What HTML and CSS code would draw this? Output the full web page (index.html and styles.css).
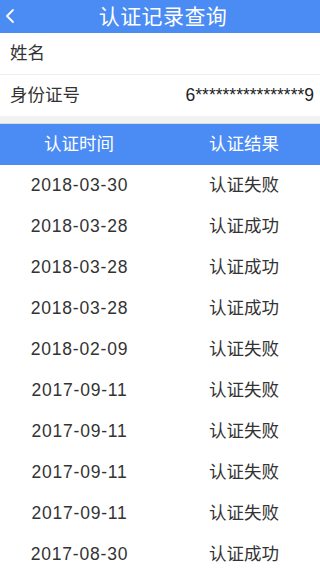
FILE: index.html
```html
<!DOCTYPE html>
<html lang="zh-CN">
<head>
<meta charset="utf-8">
<meta name="viewport" content="width=device-width, initial-scale=1">
<title>认证记录查询</title>
<link rel="stylesheet" href="styles.css">
</head>
<body>
<div class="page">
  <header class="topbar">
    <svg class="back" width="12" height="16" viewBox="0 0 12 16"><path d="M9 2 L3 8 L9 14" fill="none" stroke="#fff" stroke-width="1.8" stroke-linecap="round" stroke-linejoin="round"/></svg>
    <h1 class="title">认证记录查询</h1>
  </header>
  <section class="info">
    <div class="info-row bordered"><span class="label">姓名</span><span class="value"></span></div>
    <div class="info-row"><span class="label">身份证号</span><span class="value">6****************9</span></div>
  </section>
  <div class="gap"></div>
  <div class="table">
    <div class="thead">
      <div class="cell">认证时间</div>
      <div class="cell right">认证结果</div>
    </div>
    <div class="trow"><div class="cell date">2018-03-30</div><div class="cell right">认证失败</div></div>
    <div class="trow"><div class="cell date">2018-03-28</div><div class="cell right">认证成功</div></div>
    <div class="trow"><div class="cell date">2018-03-28</div><div class="cell right">认证成功</div></div>
    <div class="trow"><div class="cell date">2018-03-28</div><div class="cell right">认证成功</div></div>
    <div class="trow"><div class="cell date">2018-02-09</div><div class="cell right">认证失败</div></div>
    <div class="trow"><div class="cell date">2017-09-11</div><div class="cell right">认证失败</div></div>
    <div class="trow"><div class="cell date">2017-09-11</div><div class="cell right">认证失败</div></div>
    <div class="trow"><div class="cell date">2017-09-11</div><div class="cell right">认证失败</div></div>
    <div class="trow"><div class="cell date">2017-09-11</div><div class="cell right">认证失败</div></div>
    <div class="trow"><div class="cell date">2017-08-30</div><div class="cell right">认证成功</div></div>
  </div>
</div>
</body>
</html>
```
FILE: styles.css
```css
* { box-sizing: border-box; }
html, body {
  margin: 0;
  padding: 0;
  background: #fff;
  font-family: "Liberation Sans", "Noto Sans CJK SC", sans-serif;
  color: #333;
}
.page {
  width: 320px;
  height: 568px;
  overflow: hidden;
}
.topbar {
  position: relative;
  height: 33px;
  background: #4b8bf4;
  text-align: center;
}
.back {
  position: absolute;
  left: 4px;
  top: 8px;
}
.title {
  margin: 0 0 0 6px;
  font-size: 21px;
  font-weight: normal;
  color: #fff;
  letter-spacing: 0.4px;
  line-height: 33px;
}
.info-row {
  height: 41px;
  line-height: 41px;
  display: flex;
  justify-content: space-between;
  padding: 0 6px 0 10px;
  font-size: 17.5px;
  color: #333;
}
.info-row.bordered {
  border-bottom: 1px solid #eeeeee;
  height: 42px;
}
.value { color: #222; }
.gap {
  height: 8px;
  background: #f2f2f2;
  border-bottom: 1px solid #dcdcdc;
}
.thead, .trow {
  display: grid;
  grid-template-columns: 158px 1fr;
  height: 41px;
  line-height: 41px;
  font-size: 17.5px;
}
.thead {
  background: #4b8bf4;
  color: #fff;
}
.trow { color: #333; }
.cell {
  text-align: center;
  height: 41px;
}
.cell.right {
  padding-left: 10px;
}
.date {
  letter-spacing: 0.8px;
  padding-left: 1px;
}
```
